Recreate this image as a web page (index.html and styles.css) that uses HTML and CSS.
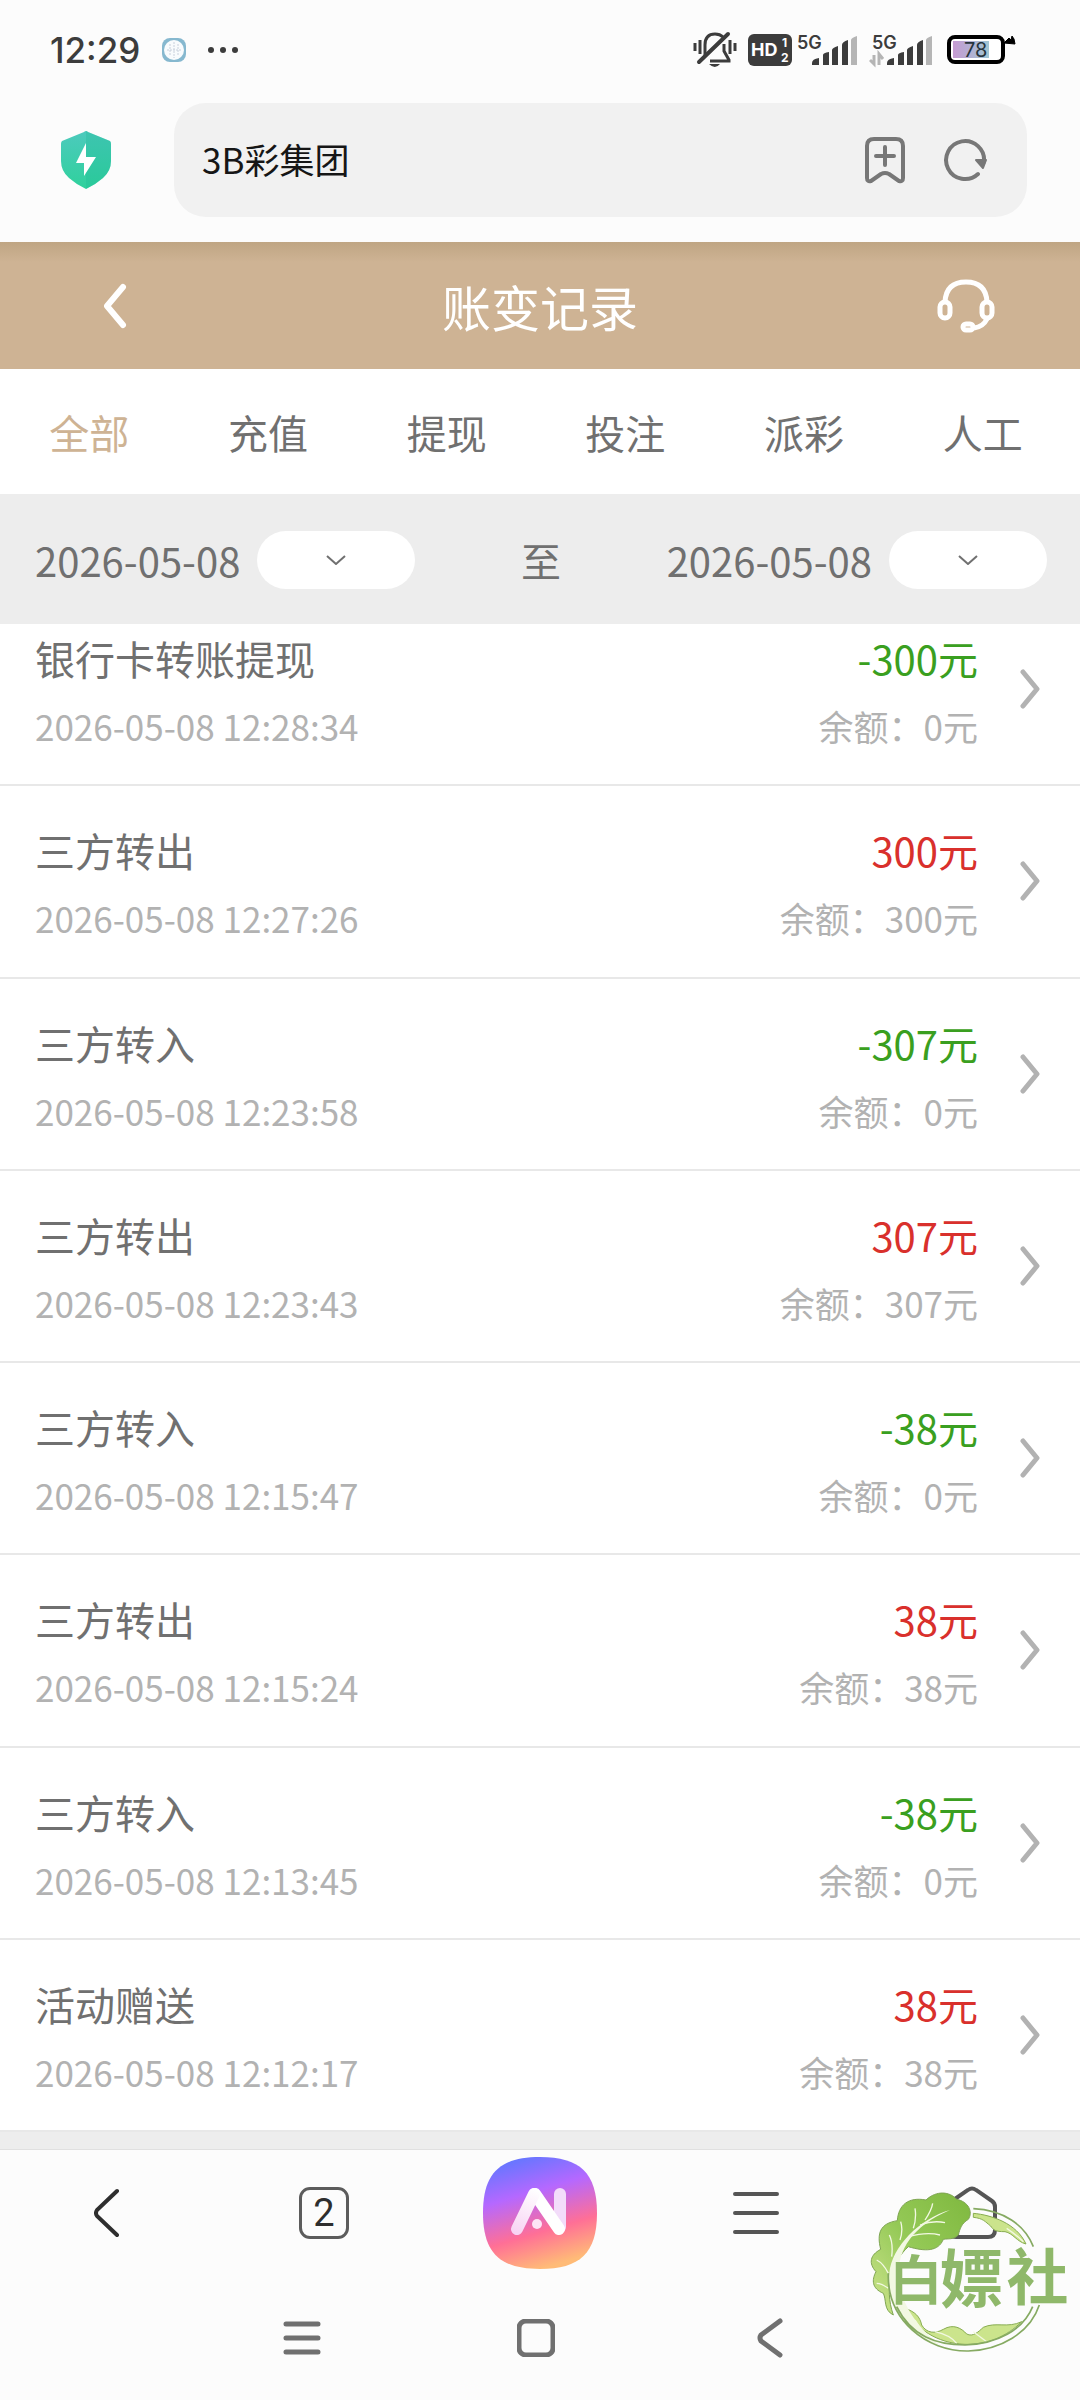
FILE: index.html
```html
<!DOCTYPE html>
<html lang="zh-CN">
<head>
    <meta charset="UTF-8">
    <meta name="viewport" content="width=device-width, initial-scale=1">
    <title>账变记录</title>
    <link rel="stylesheet" href="styles.css">
</head>
<body>
<!--公用的小图标-->
<svg class="symbols" aria-hidden="true">
    <symbol id="arrow" viewBox="0 0 20 40">
        <path d="M3 3L17 20L3 37" fill="none" stroke="#b2b2b2" stroke-width="5" stroke-linecap="round" stroke-linejoin="round"/>
    </symbol>
    <symbol id="down" viewBox="0 0 20 10">
        <path d="M1 1L10 9L19 1" fill="none" stroke="#707070" stroke-width="2"/>
    </symbol>
    <symbol id="bars" viewBox="0 0 46 30">
        <path d="M0 29V27Q0 23 7 22V29Z M11 19Q11 17 17 16V29H11Z M20 14Q20 12 26 10V29H20Z M30 9Q30 6 36 4V29H30Z" fill="#3c3c3c"/>
        <path d="M39 4Q39 2 45 0V29H39Z" fill="#b5b5b5"/>
    </symbol>
</svg>

<!--系统状态栏-->
<div class="status">
    <span class="time">12:29</span>
    <svg class="app" width="26" height="26" viewBox="0 0 26 26">
        <rect x="1" y="1" width="24" height="24" rx="8" fill="#86b8cf"/>
        <circle cx="13" cy="13" r="10" fill="#f8fbfd"/>
        <path d="M9 7V19M13 5V21M17 7V19M6 13H20" stroke="#c8d0dc" stroke-width="1" stroke-dasharray="2 1" fill="none"/>
    </svg>
    <svg width="32" height="8" viewBox="0 0 32 8" fill="#3c3c3c">
        <circle cx="4" cy="4" r="3"/><circle cx="16" cy="4" r="3"/><circle cx="28" cy="4" r="3"/>
    </svg>
    <div class="status-right">
        <svg width="44" height="38" viewBox="0 0 44 38" fill="none" stroke="#3c3c3c" stroke-width="3">
            <path d="M12 24V14Q12 3 22 3Q27 3 30 6M31 13V20L36 29V30H17"/>
            <path d="M6 31L35 3" stroke-width="4" stroke-linecap="round"/>
            <path d="M2 12V20M7 9V23M37 9V23M42 12V20"/>
            <path d="M16 33H27Q22 39 16 33Z" fill="#3c3c3c" stroke="none"/>
        </svg>
        <svg class="hd" width="44" height="32" viewBox="0 0 44 32">
            <rect width="44" height="32" rx="6" fill="#3c3c3c"/>
            <text x="3" y="22" font-size="18">HD</text>
            <text x="34" y="13" font-size="12">1</text>
            <text x="33" y="28" font-size="12">2</text>
        </svg>
        <svg class="sim" width="62" height="42" viewBox="0 0 62 42">
            <text x="0" y="20" font-size="18">5G</text>
            <use href="#bars" x="15" y="7" width="46" height="30"/>
        </svg>
        <svg class="sim two" width="65" height="42" viewBox="0 0 65 42">
            <text x="3" y="20" font-size="18">5G</text>
            <path d="M1 31L5 35V26M10 36V25L14 30" fill="none" stroke="#b5b5b5" stroke-width="3"/>
            <use href="#bars" x="18" y="7" width="46" height="30"/>
        </svg>
        <svg class="battery" width="70" height="30" viewBox="0 0 70 30">
            <defs>
                <linearGradient id="power"><stop offset="0" stop-color="#c69bd2"/><stop offset="1" stop-color="#9fc6d4"/></linearGradient>
            </defs>
            <rect x="2" y="2" width="54" height="25" rx="6" fill="#fff" stroke="#000" stroke-width="4"/>
            <rect x="6" y="6" width="36" height="17" fill="url(#power)"/>
            <path d="M57 8L62 3L64 5L65 1L67 4L68 9Z" fill="#000" stroke="#000"/>
            <text x="17" y="22" font-size="20">78</text>
        </svg>
    </div>
</div>

<!--浏览器地址栏-->
<div class="browser">
    <svg class="shield" width="52" height="60" viewBox="0 0 52 60">
        <defs>
            <linearGradient id="green" x2="0" y2="1"><stop offset="0" stop-color="#4ccabd"/><stop offset="1" stop-color="#2fd19c"/></linearGradient>
        </defs>
        <path d="M26 1Q27 1 28 2L50 11Q51 12 51 14V31Q51 41 43 48Q35 55 26 59Q17 55 9 48Q1 41 1 31V14Q1 12 2 11L24 2Q25 1 26 1Z" fill="url(#green)"/>
        <path d="M26 1Q27 1 28 2L50 11Q51 12 51 14V31Q51 41 43 48Q35 55 26 59Z" fill="#1fb896" opacity=".3"/>
        <path d="M26 13L16 33H24V46L36 27H26Z" fill="#fff"/>
    </svg>
    <div class="address">
        <input type="text" value="3B彩集团" aria-label="地址">
        <button type="button" aria-label="添加书签">
            <svg width="42" height="48" viewBox="0 0 42 48" fill="none" stroke="#777" stroke-width="4" stroke-linecap="round" stroke-linejoin="round">
                <path d="M3 10Q3 3 10 3H32Q39 3 39 10V42Q39 46 35 45L25 38Q21 36 17 38L7 45Q3 46 3 42Z"/>
                <path d="M12 20H30M21 11V29"/>
            </svg>
        </button>
        <button type="button" aria-label="刷新">
            <svg width="44" height="44" viewBox="0 0 44 44">
                <path d="M35 36A19 19 0 1 1 41 24" fill="none" stroke="#777" stroke-width="4" stroke-linecap="round"/>
                <path d="M33 22H43L40 30Z" fill="#777" stroke="#777" stroke-width="2" stroke-linejoin="round"/>
            </svg>
        </button>
    </div>
</div>

<!--页面头部-->
<header class="header">
    <button type="button" aria-label="返回">
        <svg width="26" height="48" viewBox="0 0 26 48">
            <path d="M22 5L6 24L22 43" fill="none" stroke="#fff" stroke-width="6" stroke-linecap="round" stroke-linejoin="round"/>
        </svg>
    </button>
    <h1>账变记录</h1>
    <button type="button" aria-label="客服">
        <svg width="58" height="56" viewBox="0 0 58 56" fill="none" stroke="#fff" stroke-width="5">
            <path d="M8 24Q9 4 29 4Q49 4 50 24"/>
            <rect x="3" y="24" width="10" height="16" rx="5"/>
            <rect x="45" y="24" width="10" height="16" rx="5"/>
            <path d="M50 41Q46 49 37 50"/>
            <rect x="26" y="46" width="10" height="6" rx="3"/>
        </svg>
    </button>
</header>

<nav class="tabs">
    <a class="on" href="#">全部</a>
    <a href="#">充值</a>
    <a href="#">提现</a>
    <a href="#">投注</a>
    <a href="#">派彩</a>
    <a href="#">人工</a>
</nav>

<!--日期筛选-->
<div class="dates">
    <div class="date">
        <span>2026-05-08</span>
        <button type="button" aria-label="开始日期"><svg width="20" height="10"><use href="#down"/></svg></button>
    </div>
    <span>至</span>
    <div class="date">
        <span>2026-05-08</span>
        <button type="button" aria-label="结束日期"><svg width="20" height="10"><use href="#down"/></svg></button>
    </div>
</div>

<!--记录列表 out是绿色 in是红色-->
<main class="list">
    <ul>
        <li><a href="#">
            <div class="info"><p class="name">银行卡转账提现</p><p class="sub">2026-05-08 12:28:34</p></div>
            <div class="money"><p class="out">-300元</p><p class="sub">余额：0元</p></div>
            <svg width="20" height="40"><use href="#arrow"/></svg>
        </a></li>
        <li><a href="#">
            <div class="info"><p class="name">三方转出</p><p class="sub">2026-05-08 12:27:26</p></div>
            <div class="money"><p class="in">300元</p><p class="sub">余额：300元</p></div>
            <svg width="20" height="40"><use href="#arrow"/></svg>
        </a></li>
        <li><a href="#">
            <div class="info"><p class="name">三方转入</p><p class="sub">2026-05-08 12:23:58</p></div>
            <div class="money"><p class="out">-307元</p><p class="sub">余额：0元</p></div>
            <svg width="20" height="40"><use href="#arrow"/></svg>
        </a></li>
        <li><a href="#">
            <div class="info"><p class="name">三方转出</p><p class="sub">2026-05-08 12:23:43</p></div>
            <div class="money"><p class="in">307元</p><p class="sub">余额：307元</p></div>
            <svg width="20" height="40"><use href="#arrow"/></svg>
        </a></li>
        <li><a href="#">
            <div class="info"><p class="name">三方转入</p><p class="sub">2026-05-08 12:15:47</p></div>
            <div class="money"><p class="out">-38元</p><p class="sub">余额：0元</p></div>
            <svg width="20" height="40"><use href="#arrow"/></svg>
        </a></li>
        <li><a href="#">
            <div class="info"><p class="name">三方转出</p><p class="sub">2026-05-08 12:15:24</p></div>
            <div class="money"><p class="in">38元</p><p class="sub">余额：38元</p></div>
            <svg width="20" height="40"><use href="#arrow"/></svg>
        </a></li>
        <li><a href="#">
            <div class="info"><p class="name">三方转入</p><p class="sub">2026-05-08 12:13:45</p></div>
            <div class="money"><p class="out">-38元</p><p class="sub">余额：0元</p></div>
            <svg width="20" height="40"><use href="#arrow"/></svg>
        </a></li>
        <li><a href="#">
            <div class="info"><p class="name">活动赠送</p><p class="sub">2026-05-08 12:12:17</p></div>
            <div class="money"><p class="in">38元</p><p class="sub">余额：38元</p></div>
            <svg width="20" height="40"><use href="#arrow"/></svg>
        </a></li>
    </ul>
</main>

<!--浏览器工具栏-->
<div class="toolbar">
    <button type="button" aria-label="后退">
        <svg width="28" height="50" viewBox="0 0 28 50">
            <path d="M23 3L3 22Q1 25 3 28L23 47" fill="none" stroke="#2e2e2e" stroke-width="4" stroke-linecap="round"/>
        </svg>
    </button>
    <button type="button"><span class="count">2</span></button>
    <button type="button" aria-label="AI">
        <svg width="114" height="112" viewBox="0 0 114 112">
            <defs>
                <linearGradient id="ai" x1=".2" y1="0" x2=".5" y2="1">
                    <stop offset="0" stop-color="#5b78ff"/>
                    <stop offset=".35" stop-color="#b568ff"/>
                    <stop offset=".7" stop-color="#ff6f96"/>
                    <stop offset="1" stop-color="#ffbb77"/>
                </linearGradient>
                <linearGradient id="leg" gradientUnits="userSpaceOnUse" x1="52" y1="32" x2="34" y2="76">
                    <stop offset="0" stop-color="#fff"/><stop offset="1" stop-color="#f8d4f4"/>
                </linearGradient>
            </defs>
            <path d="M57 0C97 0 114 16 114 56S97 112 57 112S0 96 0 56S17 0 57 0Z" fill="url(#ai)"/>
            <g fill="none" stroke-width="12" stroke-linecap="round">
                <path d="M77 37V70" stroke="#f3dcfa"/>
                <path d="M52 37L76 72" stroke="#fff"/>
                <path d="M51 37L34 72" stroke="url(#leg)"/>
            </g>
            <circle cx="54" cy="67" r="5" fill="#fde4f5"/>
        </svg>
    </button>
    <button type="button" aria-label="菜单">
        <svg width="48" height="44" viewBox="0 0 48 44">
            <path d="M3 3H45M3 22H45M3 41H45" stroke="#555" stroke-width="4" stroke-linecap="round"/>
        </svg>
    </button>
    <button type="button" aria-label="主页">
        <svg width="52" height="54" viewBox="0 0 52 54">
            <path d="M22 4Q26 1 30 4L46 15Q49 17 49 21V44Q49 51 42 51H10Q3 51 3 44V21Q3 17 6 15Z" fill="none" stroke="#555" stroke-width="4"/>
        </svg>
    </button>
</div>

<!--系统导航键-->
<div class="system">
    <button type="button" aria-label="最近任务">
        <svg width="38" height="36" viewBox="0 0 38 36">
            <path d="M3 4H35M3 18H35M3 32H35" stroke="#707070" stroke-width="5" stroke-linecap="round"/>
        </svg>
    </button>
    <button type="button" aria-label="桌面">
        <svg width="38" height="38" viewBox="0 0 38 38">
            <rect x="2" y="2" width="34" height="34" rx="7" fill="none" stroke="#707070" stroke-width="5"/>
        </svg>
    </button>
    <button type="button" aria-label="返回上一级">
        <svg width="26" height="40" viewBox="0 0 26 40">
            <path d="M23 3L4 17Q2 20 4 23L23 37" fill="none" stroke="#707070" stroke-width="5" stroke-linecap="round"/>
        </svg>
    </button>
</div>

<!--右下角的水印-->
<svg class="mark" width="240" height="240" viewBox="0 0 720 720">
    <defs>
        <linearGradient id="leaf" x1="1" y1="0" x2="0" y2="1">
            <stop offset="0" stop-color="#7fb83f"/><stop offset=".5" stop-color="#94c956"/><stop offset="1" stop-color="#cfe58f"/>
        </linearGradient>
    </defs>
    <path d="M195 445C225 455 240 470 245 495C260 520 285 522 310 508C340 490 365 505 380 522C400 532 415 515 430 502C465 485 505 505 545 485C500 530 440 555 375 553C290 550 225 505 195 445Z" fill="#cbe48c" stroke="#88ad52" stroke-width="3"/>
    <path d="M400 160C455 165 530 190 558 252C530 245 520 220 495 215C465 215 460 210 452 198C435 185 430 175 400 172Z" fill="#cbe48c" stroke="#88ad52" stroke-width="3"/>
    <path d="M160 465C130 450 140 420 130 400C95 385 95 360 108 335C85 310 90 285 122 268C110 220 120 190 172 182C175 135 205 110 258 120C290 90 330 95 350 118C385 125 400 155 385 178C365 190 360 205 355 225C340 240 325 235 310 238C295 275 255 275 205 260C160 300 130 380 160 465Z" fill="url(#leaf)" stroke="#7fa552" stroke-width="3"/>
    <path d="M330 150C240 175 155 260 148 340C140 420 185 520 300 555C240 510 190 440 180 380C165 300 190 210 330 150Z" fill="#f2f8e2"/>
    <path d="M220 205Q230 175 225 145M255 180Q275 150 278 130M240 195Q280 180 315 188M205 230Q260 215 300 225M180 240Q190 210 182 185M155 290Q160 250 148 225M145 340Q130 310 110 300M145 385Q125 370 110 370M285 515Q330 525 350 550M225 480Q235 500 250 515M400 515Q420 530 440 545M500 205Q530 225 550 245" fill="none" stroke="#f2f8e2" stroke-width="4"/>
    <path d="M145 340C140 480 260 575 385 573C480 570 570 520 598 435M170 440C215 530 290 555 375 555C470 552 550 510 578 440M400 146C490 150 555 195 580 260" fill="none" stroke="#86aa62" stroke-width="5"/>
    <text x="148" y="420" font-size="160">白</text>
    <text x="300" y="425" font-size="190">嫖</text>
    <text x="500" y="420" font-size="185">社</text>
</svg>
</body>
</html>
```

FILE: styles.css
```css
html, body, div, ul, li, p, h1 {
    margin: 0;
    padding: 0;
    list-style: none;
}

body {
    display: flex;
    flex-direction: column;
    min-height: 100vh;
    position: relative;
    background: #ededed;
    font-family: "Noto Sans CJK SC", sans-serif;
    font-size: 40px;
    color: #707070;
}

a {
    color: inherit;
    text-decoration: none;
}

button {
    display: flex;
    align-items: center;
    justify-content: center;
    padding: 0;
    border: 0;
    background: none;
    font: inherit;
    color: inherit;
    cursor: pointer;
}

svg {
    display: block;
    flex: none;
}

.symbols {
    position: absolute;
    width: 0;
    height: 0;
}

/* 状态栏 */
.status {
    display: flex;
    align-items: center;
    height: 100px;
    padding: 0 63px 0 50px;
    background: #fcfcfc;
    font-family: Inter, sans-serif;
    color: #3c3c3c;
}

.time {
    font-size: 35px;
    font-weight: 500;
}

.app {
    margin: 0 20px 0 21px;
}

.status-right {
    display: flex;
    align-items: center;
    margin-left: auto;
}

.hd {
    margin: 0 5px 0 11px;
    fill: #fff;
    font-weight: 700;
}

.sim {
    fill: #3c3c3c;
    font-weight: 600;
}

.two {
    margin: 0 13px 0 10px;
}

.battery {
    fill: #26343c;
}

/* 地址栏 */
.browser {
    display: flex;
    align-items: center;
    padding: 3px 53px 25px 60px;
    background: #fcfcfc;
}

.address {
    flex: 1;
    display: flex;
    align-items: center;
    gap: 37px;
    height: 114px;
    margin-left: 62px;
    padding: 0 40px 0 28px;
    border-radius: 32px;
    background: #f1f1f1;
}

.address input {
    flex: 1;
    min-width: 0;
    padding: 0 0 4px;
    border: 0;
    outline: none;
    background: none;
    font: inherit;
    font-size: 35px;
    color: #161616;
}

/* 头部 */
.header {
    display: flex;
    align-items: center;
    height: 127px;
    padding: 0 85px;
    background: linear-gradient(#bfa583, #ceb394 20px);
    color: #fff;
}

.header h1 {
    flex: 1;
    font-size: 49px;
    font-weight: 400;
    text-align: center;
}

.header button {
    width: 58px;
}

.tabs {
    display: grid;
    grid-template-columns: repeat(6, 1fr);
    padding: 2px 8px 0 0;
    background: #fff;
    line-height: 123px;
    text-align: center;
}

.tabs .on {
    color: #ceb394;
}

/* 日期 */
.dates {
    display: flex;
    align-items: center;
    justify-content: space-between;
    height: 129px;
    padding: 1px 33px 0 35px;
    background: #ededed;
}

.date {
    display: flex;
    align-items: center;
    gap: 17px;
}

.date button {
    width: 158px;
    height: 58px;
    border-radius: 29px;
    background: #fff;
}

/* 列表 */
.list {
    flex: 1;
    display: flex;
    overflow: hidden;
}

/* 已经向上滚动了一点 */
.list ul {
    flex: 1;
    display: grid;
    grid-auto-rows: 1fr;
    margin-top: -30px;
}

.list li {
    border-bottom: 2px solid #e8e8e8;
    background: #fff;
}

.list a {
    display: flex;
    align-items: center;
    padding: 0 40px 0 35px;
}

.info {
    flex: 1;
}

.info, .money {
    padding: 30px 0 24px;
    line-height: 68px;
}

.money {
    margin-right: 42px;
    text-align: right;
}

.sub {
    font-size: 35px;
    color: #b2b2b2;
}

.out {
    color: #3a9f20;
}

.in {
    color: #d9302c;
}

/* 底部 */
.toolbar {
    display: grid;
    grid-template-columns: repeat(5, 1fr);
    align-items: center;
    height: 125px;
    margin-top: 17px;
    border-top: 1px solid #e0e0e0;
    background: #fcfcfc;
}

.count {
    width: 44px;
    height: 46px;
    border: 3px solid #5c5c5c;
    border-radius: 11px;
    font-family: Roboto, sans-serif;
    font-size: 38px;
    line-height: 46px;
    text-align: center;
    color: #2e2e2e;
}

.system {
    display: grid;
    grid-template-columns: repeat(3, 1fr);
    align-items: center;
    height: 125px;
    padding: 0 193px 0 185px;
    background: #fcfcfc;
}

.mark {
    position: absolute;
    right: 0;
    bottom: 0;
    pointer-events: none;
    fill: #8fb86a;
    font-weight: 700;
}
```
